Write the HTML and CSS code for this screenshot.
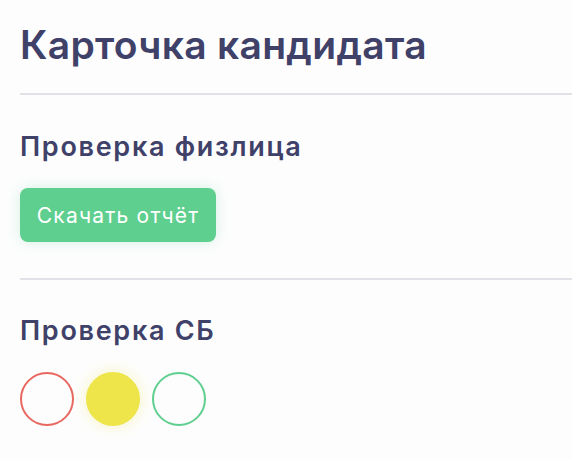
FILE: index.html
```html
<!DOCTYPE html>
<html lang="ru">
<head>
    <meta charset="UTF-8">
    <meta name="viewport" content="width=device-width, initial-scale=1.0">
    <title>Карточка кандидата</title>
    <link rel="stylesheet" href="styles.css">
</head>
<body>
    <div class="card">
        <h1 class="title">Карточка кандидата</h1>
        <div class="section">
            <h2 class="sectionTitle">Проверка физлица</h2>
            <button class="btn">Скачать отчёт</button>
        </div>
        <div class="section">
            <h2 class="sectionTitle">Проверка СБ</h2>
            <div class="lights">
                <span class="light red"></span>
                <span class="light yellow"></span>
                <span class="light green"></span>
            </div>
        </div>
    </div>
</body>
</html>
```

FILE: styles.css
```css
*{
    padding: 0;
    margin: 0;
    box-sizing: border-box;
}
body{
    background: #fdfdfe;
    font-family: Inter, "Noto Sans", sans-serif;
    color: #3f4169;
}
.card{
    padding: 21px 0 0 20px;
}
.title{
    font-size: 39px;
    font-weight: 600;
    line-height: 48px;
    letter-spacing: 0.3px;
    padding-bottom: 24px;
    border-bottom: 2px solid #e1e1e8;
}
.section{
    padding: 36px 0 36px;
    border-bottom: 2px solid #e1e1e8;
}
.section:last-child{
    border-bottom: none;
    padding-top: 35px;
}
.sectionTitle{
    font-size: 27px;
    font-weight: 600;
    line-height: 32px;
    letter-spacing: 1.7px;
    margin-bottom: 25px;
}
.btn{
    background-color: #5fcf8f;
    color: #fff;
    border: none;
    border-radius: 8px;
    width: 196px;
    height: 54px;
    font-family: Inter, "Noto Sans", sans-serif;
    font-size: 21px;
    letter-spacing: 1.2px;
    box-shadow: 0 0 14px rgba(95, 207, 143, 0.25);
}
.lights{
    display: flex;
    gap: 12px;
    margin-top: 3px;
}
.light{
    width: 54px;
    height: 54px;
    border-radius: 50%;
    border: 2px solid transparent;
}
.red{
    border-color: #e8675f;
}
.yellow{
    background-color: #ede54a;
    border-color: #ede54a;
    box-shadow: 0 0 16px rgba(237, 229, 74, 0.35);
}
.green{
    border-color: #5fcf8f;
}
```
